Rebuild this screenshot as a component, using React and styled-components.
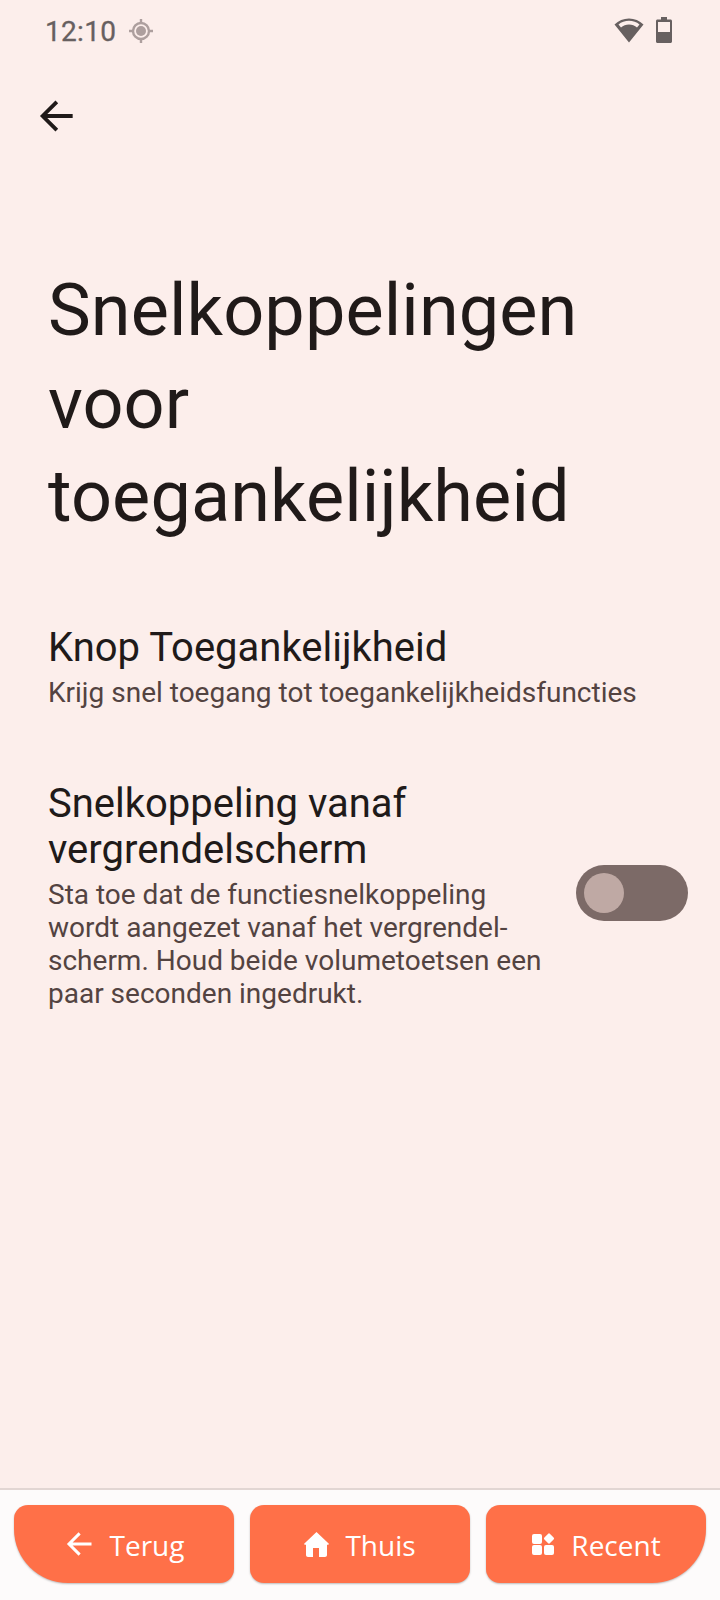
import { createGlobalStyle, styled } from "styled-components";

const GlobalStyle = createGlobalStyle`
  html, body {
    margin: 0;
    padding: 0;
    background: #fceeeb;
  }
`;

const Page = styled.div`
  width: 720px;
  height: 1600px;
  display: flex;
  flex-direction: column;
  background: #fceeeb;
  font-family: Roboto, sans-serif;
  overflow: hidden;
`;

const StatusBar = styled.div`
  height: 62px;
  padding: 0 48px 0 45px;
  display: flex;
  align-items: center;
  justify-content: space-between;
  color: #676060;
`;

const StatusLeft = styled.div`
  display: flex;
  align-items: center;
  gap: 13px;
  font-size: 28px;
  letter-spacing: 0.3px;
  -webkit-text-stroke: 0.3px #676060;
`;

const StatusRight = styled.div`
  display: flex;
  align-items: center;
  gap: 12px;
  padding-bottom: 2px;
`;

const Toolbar = styled.div`
  height: 108px;
  padding-left: 36px;
  display: flex;
  align-items: center;
`;

const Content = styled.div`
  flex: 1;
  display: flex;
  flex-direction: column;
`;

const Title = styled.h1`
  margin: 94px 0 0;
  padding: 0 48px;
  font-size: 72px;
  line-height: 93px;
  font-weight: 400;
  letter-spacing: 0.1px;
  color: #201a19;
`;

const Row = styled.div`
  display: flex;
  align-items: center;
  padding: 0 32px 0 48px;
  margin-top: ${(props) => props.$top}px;
`;

const RowText = styled.div`
  flex: 1;
  min-width: 0;
`;

const RowTitle = styled.div`
  font-size: 40px;
  line-height: 46.5px;
  color: #201a19;
`;

const RowSummary = styled.div`
  margin-top: 4px;
  font-size: 28px;
  line-height: 33px;
  color: #534341;
`;

const Switch = styled.div`
  width: 112px;
  height: 56px;
  margin-bottom: 4px;
  border-radius: 28px;
  background: #7c6a67;
  display: flex;
  align-items: center;
  padding-left: 8px;
  box-sizing: border-box;
  flex-shrink: 0;
`;

const Thumb = styled.div`
  width: 40px;
  height: 40px;
  border-radius: 50%;
  background: #bfa9a4;
`;

const NavBar = styled.div`
  height: 112px;
  border-top: 2px solid #e2d6d3;
  background: #fdfbfb;
  display: flex;
  gap: 16px;
  padding: 15px 14px 0;
  box-sizing: border-box;
`;

const NavButton = styled.div`
  flex: 1;
  height: 78px;
  background: #ff7048;
  border-radius: ${(props) =>
    props.$side === "left"
      ? "14px 14px 14px 54px"
      : props.$side === "right"
        ? "14px 14px 54px 14px"
        : "14px"};
  box-shadow: 0 1px 2px rgba(0, 0, 0, 0.25);
  display: flex;
  align-items: center;
  justify-content: center;
  gap: 16px;
  color: #fff;
  font-family: "Open Sans", sans-serif;
  font-size: 28px;
  font-weight: 500;
`;

const NavLabel = styled.span`
  padding-top: 2px;
`;

const LocationIcon = () => (
  <svg width="24" height="24" viewBox="0 0 24 24" fill="none">
    <circle cx="12" cy="12" r="8" stroke="#ad9f9e" strokeWidth="2.4" />
    <circle cx="12" cy="12" r="5" fill="#ad9f9e" />
    <path d="M12 0v4M12 20v4M0 12h4M20 12h4" stroke="#ad9f9e" strokeWidth="2.4" />
  </svg>
);

const WifiIcon = () => (
  <svg width="30" height="26" viewBox="0 0 30 26">
    <path
      fillRule="evenodd"
      fill="#676060"
      d="M15 25.5 0.5 7.500C4.500 3.600 9.500 1.500 15 1.500s10.500 2.100 14.500 6L15 25.500ZM7 10.500c2.200-1.900 5-3 8-3s5.800 1.100 8 3l2.500-3.100C22.600 5 19 3.800 15 3.800S7.400 5 4.500 7.400L7 10.500Z"
    />
  </svg>
);

const BatteryIcon = () => (
  <svg width="16" height="26" viewBox="0 0 16 26">
    <path
      fillRule="evenodd"
      fill="#676060"
      d="M5 0h6v2.500h3.500c.8 0 1.500.7 1.500 1.500v20.500c0 .8-.7 1.500-1.500 1.500h-13C.7 26 0 25.300 0 24.500V4c0-.8.7-1.500 1.500-1.500H5V0ZM2 5v10h12V5H2Z"
    />
  </svg>
);

const BackIcon = ({ size, color, width }) => (
  <svg width={size} height={size} viewBox="0 0 24 24" fill="none">
    <path d="M22 12H4.500M12.500 3.500 4 12l8.500 8.500" stroke={color} strokeWidth={width} />
  </svg>
);

const HomeIcon = () => (
  <svg width="25" height="25" viewBox="0 0 25 25">
    <path
      fill="#fff"
      d="M12.500 0 24.600 11.400c.6.600.2 1.300-.6 1.300H23v10.300c0 1.100-.9 2-2 2h-6v-9H9v9H4c-1.100 0-2-.9-2-2V12.700H1c-.8 0-1.200-.7-.6-1.300L12.500 0Z"
    />
  </svg>
);

const RecentIcon = () => (
  <svg width="24" height="24" viewBox="0 0 24 24" fill="#fff">
    <rect x="1" y="2" width="10" height="10" rx="2" />
    <rect x="1" y="13" width="10" height="10" rx="2" />
    <rect x="13" y="13" width="10" height="10" rx="2" />
    <rect x="14" y="2.500" width="8" height="8" rx="1.500" transform="rotate(45 18 6.500)" />
  </svg>
);

const App = () => {
  return (
    <Page>
      <GlobalStyle />
      <StatusBar>
        <StatusLeft>
          12:10
          <LocationIcon />
        </StatusLeft>
        <StatusRight>
          <WifiIcon />
          <BatteryIcon />
        </StatusRight>
      </StatusBar>
      <Toolbar>
        <BackIcon size={40} color="#201a19" width={2.3} />
      </Toolbar>
      <Content>
        <Title>Snelkoppelingen voor toegankelijkheid</Title>
        <Row $top={82}>
          <RowText>
            <RowTitle>Knop Toegankelijkheid</RowTitle>
            <RowSummary>Krijg snel toegang tot toegankelijkheidsfuncties</RowSummary>
          </RowText>
        </Row>
        <Row $top={72}>
          <RowText>
            <RowTitle>
              Snelkoppeling vanaf
              <br />
              vergrendelscherm
            </RowTitle>
            <RowSummary>
              Sta toe dat de functiesnelkoppeling
              <br />
              wordt aangezet vanaf het vergrendel-
              <br />
              scherm. Houd beide volumetoetsen een
              <br />
              paar seconden ingedrukt.
            </RowSummary>
          </RowText>
          <Switch>
            <Thumb />
          </Switch>
        </Row>
      </Content>
      <NavBar>
        <NavButton $side="left">
          <BackIcon size={30} color="#fff" width={2.4} />
          <NavLabel>Terug</NavLabel>
        </NavButton>
        <NavButton>
          <HomeIcon />
          <NavLabel>Thuis</NavLabel>
        </NavButton>
        <NavButton $side="right">
          <RecentIcon />
          <NavLabel>Recent</NavLabel>
        </NavButton>
      </NavBar>
    </Page>
  );
};

export default App;
